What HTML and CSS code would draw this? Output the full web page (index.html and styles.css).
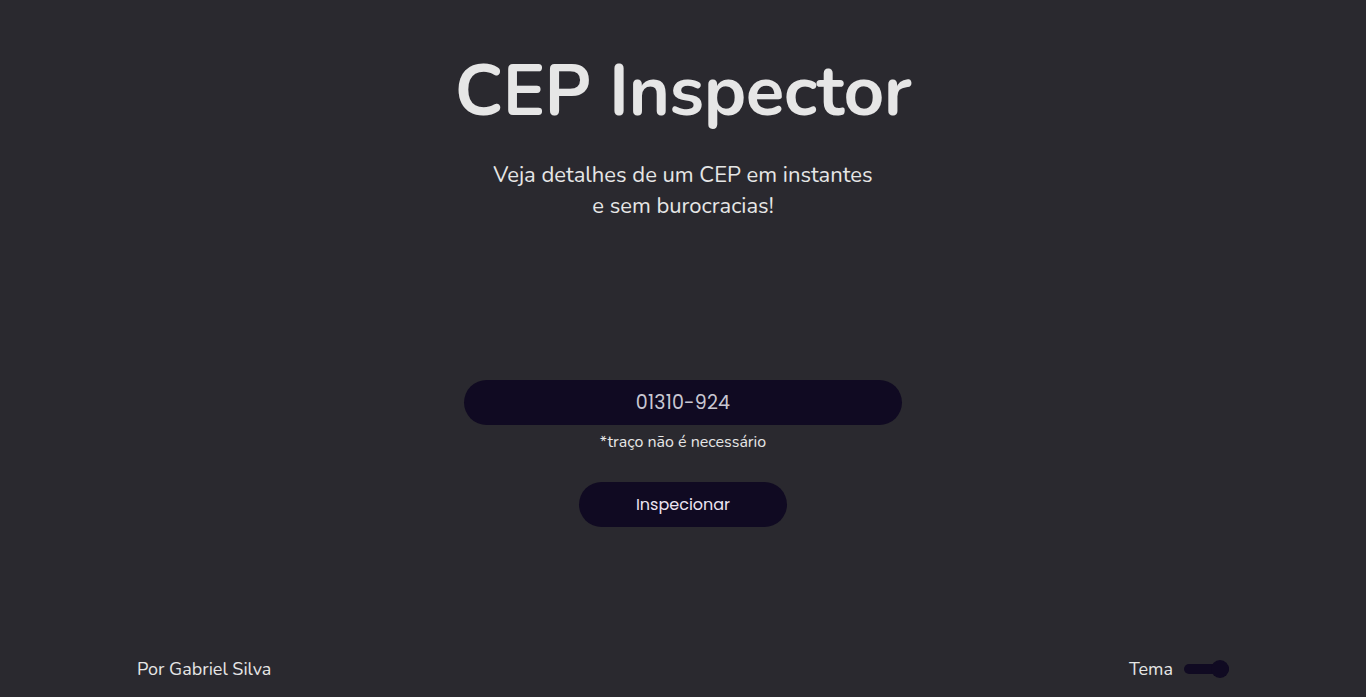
FILE: index.html
```html
<!DOCTYPE html>
<html lang="pt-BR">
<head>
<meta charset="utf-8">
<title>CEP Inspector</title>
<link rel="stylesheet" href="styles.css">
</head>
<body>
<div class="page">
  <header class="hero">
    <h1 class="title">CEP Inspector</h1>
    <p class="subtitle">Veja detalhes de um CEP em instantes<br>e sem burocracias!</p>
  </header>
  <main class="form">
    <div class="field">01310-924</div>
    <p class="hint">*traço não é necessário</p>
    <button class="btn">Inspecionar</button>
  </main>
  <footer class="footer">
    <span class="author">Por Gabriel Silva</span>
    <div class="theme">
      <span>Tema</span>
      <span class="toggle"><span class="knob"></span></span>
    </div>
  </footer>
</div>
</body>
</html>
```
FILE: styles.css
```css
* { box-sizing: border-box; }
html, body { margin: 0; padding: 0; }
body {
  background: #2a292f;
  color: #e6e6e6;
  font-family: "Nunito", "Open Sans", sans-serif;
  height: 697px;
  overflow: hidden;
}
.page {
  height: 697px;
  display: flex;
  flex-direction: column;
  align-items: center;
}
.hero {
  display: flex;
  flex-direction: column;
  align-items: center;
  padding-top: 48px;
}
.title {
  margin: 0;
  font-family: "Nunito", "Open Sans", sans-serif;
  font-weight: 700;
  font-size: 71px;
  line-height: 88px;
  letter-spacing: -0.5px;
  color: #e6e6e6;
}
.subtitle {
  margin: 24px 0 0;
  text-align: center;
  font-size: 22px;
  line-height: 31px;
  color: #e6e6e6;
}
.form {
  margin-top: 158px;
  display: flex;
  flex-direction: column;
  align-items: center;
}
.field {
  width: 438px;
  height: 45px;
  border-radius: 23px;
  background: #100a22;
  color: #c9c7d2;
  font-family: "Poppins", "Inter", sans-serif;
  font-size: 19px;
  display: flex;
  align-items: center;
  justify-content: center;
  letter-spacing: 0.2px;
}
.hint {
  margin: 6px 0 0;
  font-size: 16px;
  line-height: 22px;
  color: #e6e6e6;
}
.btn {
  margin-top: 29px;
  width: 208px;
  height: 45px;
  border: none;
  border-radius: 23px;
  background: #100a22;
  color: #ece4f2;
  font-family: "Poppins", "Inter", sans-serif;
  font-size: 16px;
}
.footer {
  margin-top: auto;
  align-self: stretch;
  display: flex;
  justify-content: space-between;
  align-items: center;
  padding: 0 137px 16px 137px;
  font-size: 18px;
  line-height: 24px;
}
.theme {
  display: flex;
  align-items: center;
  gap: 11px;
}
.toggle {
  position: relative;
  width: 45px;
  height: 10px;
  border-radius: 5px;
  background: #100a22;
}
.knob {
  position: absolute;
  right: 0;
  top: -4px;
  width: 18px;
  height: 18px;
  border-radius: 50%;
  background: #100a22;
}
```
